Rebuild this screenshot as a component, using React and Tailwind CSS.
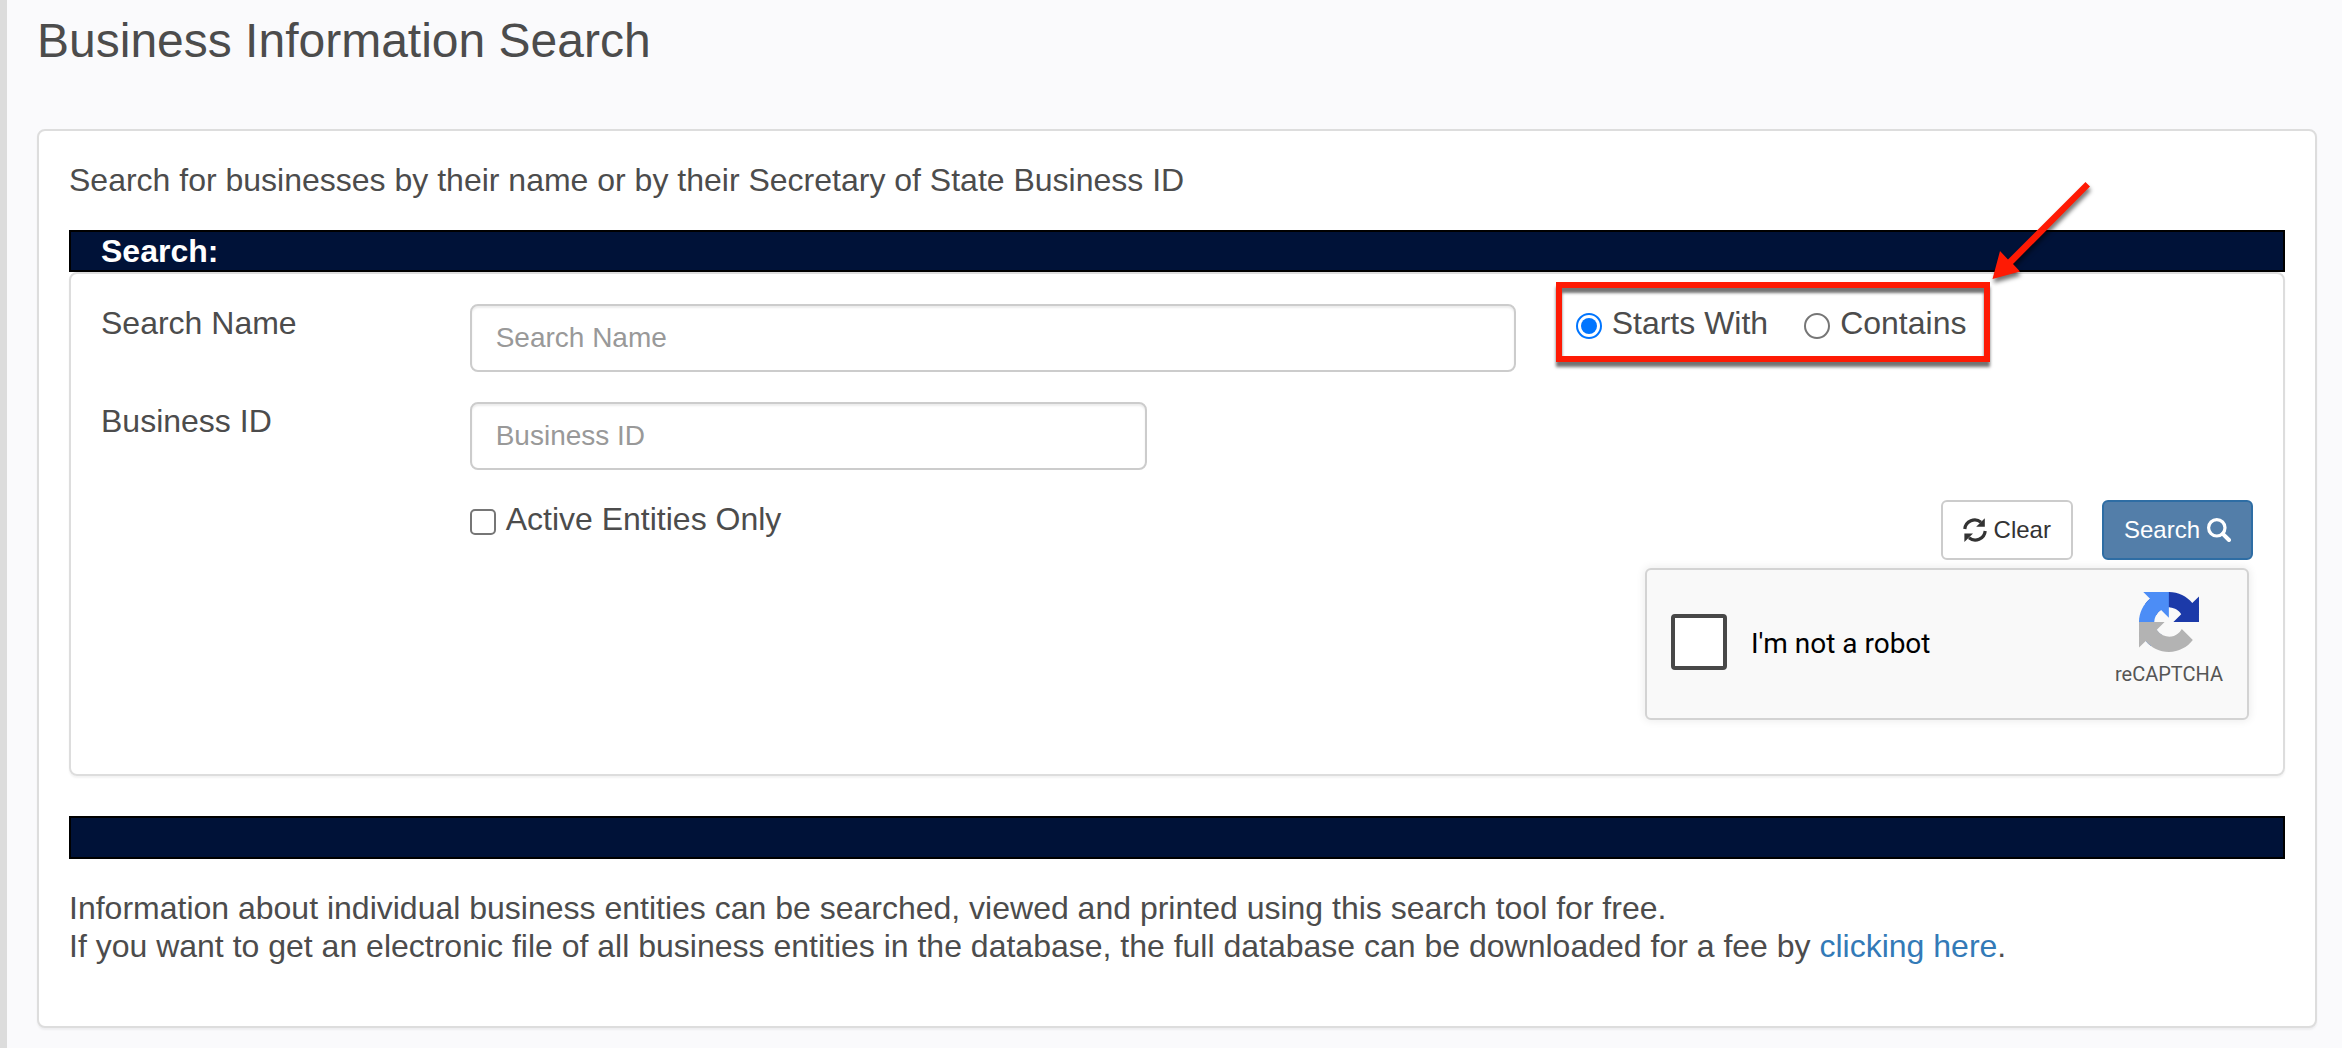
import React from "react";

const radioClass =
  "mt-[6px] appearance-none shrink-0 size-[26px] rounded-full border-2 border-[#767676] bg-white grid place-content-center checked:border-[#0075ff] before:content-[''] before:size-4 before:rounded-full checked:before:bg-[#0075ff]";

function RefreshIcon() {
  return (
    <svg className="size-6 shrink-0" viewBox="0 0 24 24" aria-hidden="true">
      <path d="M1.8 11A10 10 0 0 1 18 4.2" fill="none" stroke="#333" strokeWidth="3.2" />
      <path d="M21.8 0.3V8.8H13.2Z" fill="#333" />
      <path d="M22.2 13A10 10 0 0 1 6 19.8" fill="none" stroke="#333" strokeWidth="3.2" />
      <path d="M1.4 23.9V15.4H10Z" fill="#333" />
    </svg>
  );
}

function SearchIcon() {
  return (
    <svg className="size-6 shrink-0" viewBox="0 0 24 24" aria-hidden="true">
      <circle cx="9.8" cy="9.8" r="8.2" fill="none" stroke="#fff" strokeWidth="3.2" />
      <path d="M15.8 15.8L22 22" stroke="#fff" strokeWidth="4" strokeLinecap="round" />
    </svg>
  );
}

function CaptchaLogo() {
  return (
    <svg className="size-[60px]" viewBox="0 0 64 64" aria-hidden="true">
      <path
        fill="#1C3AA9"
        d="M64 31.955l-.033-1.37V4.687l-7.16 7.16C50.948 4.674 42.033.093 32.05.093c-10.4 0-19.622 4.96-25.458 12.64l11.736 11.86a15.55 15.55 0 0 1 4.754-5.334c2.05-1.6 4.952-2.906 8.968-2.906.485 0 .86.057 1.135.163 4.976.393 9.288 3.14 11.828 7.124l-8.307 8.307L64 31.953"
      />
      <path
        fill="#4C8DF6"
        d="M31.862.094l-1.37.033H4.594l7.16 7.16C4.58 13.147 0 22.06 0 32.046c0 10.4 4.96 19.622 12.64 25.458L24.5 45.768a15.55 15.55 0 0 1-5.334-4.754c-1.6-2.05-2.906-4.952-2.906-8.968 0-.485.057-.86.163-1.135.393-4.976 3.14-9.288 7.124-11.828l8.307 8.307L31.86.095"
      />
      <path
        fill="#B3B3B3"
        d="M.001 32.045l.033 1.37v25.898l7.16-7.16c5.86 7.173 14.774 11.754 24.76 11.754 10.4 0 19.622-4.96 25.458-12.64l-11.736-11.86a15.55 15.55 0 0 1-4.754 5.334c-2.05 1.6-4.952 2.906-8.968 2.906-.485 0-.86-.057-1.135-.163-4.976-.393-9.288-3.14-11.828-7.124l8.307-8.307c-10.522.04-22.4.066-27.295-.005"
      />
    </svg>
  );
}

function Arrow() {
  return (
    <svg
      className="absolute -top-[112px] left-[424px] w-[112px] h-[110px] pointer-events-none drop-shadow-[1px_4px_2px_rgba(0,0,0,0.55)]"
      viewBox="0 0 112 110"
      aria-hidden="true"
    >
      <path d="M6.5 103L14 75L22 83.5L99.5 6L104 10.5L27 88L34 95.5Z" fill="#fe1a04" />
    </svg>
  );
}

const inputClass =
  "block w-full h-[68px] rounded-lg border-2 border-[#ccc] bg-white px-6 text-[28px] text-[#555] placeholder:text-[#999] placeholder:opacity-100 shadow-[inset_0_2px_2px_rgba(0,0,0,0.075)] outline-none";

export default function App() {
  return (
    <div className="flex min-h-screen bg-[#fafafc] font-['Liberation_Sans',Arial,sans-serif] text-[32px] leading-[38px] text-[#4c4c4c]">
      <div className="w-[7px] shrink-0 bg-[#dcdcdc]" />
      <main className="flex-1 min-w-0 pl-[30px] pr-[25px] pb-5">
        <h1 className="mt-[14px] mb-[62px] text-[48px] leading-[53px]">Business Information Search</h1>
        <section className="rounded-lg border-2 border-[#ddd] bg-white px-[30px] pt-[30px] pb-[61px] shadow-[0_2px_2px_rgba(0,0,0,0.05)]">
          <p className="mb-[31px]">Search for businesses by their name or by their Secretary of State Business ID</p>
          <h2 className="h-[42px] border-2 border-black bg-[#001238] px-[30px] font-bold text-white">Search:</h2>
          <form
            className="rounded-lg border-2 border-[#ddd] pt-[30px] pb-[54px] shadow-[0_2px_2px_rgba(0,0,0,0.05)]"
            onSubmit={(e) => e.preventDefault()}
          >
            <div className="grid grid-cols-12">
              <label htmlFor="name" className="col-span-2 px-[30px]">Search Name</label>
              <div className="col-span-6 px-[30px]">
                <input id="name" type="text" placeholder="Search Name" className={inputClass} />
              </div>
              <div className="col-span-4 px-[30px]">
                <div className="relative w-fit">
                  <fieldset className="flex gap-9">
                    <label className="flex items-center gap-[10px]">
                      <input type="radio" name="mode" defaultChecked className={radioClass} />
                      Starts With
                    </label>
                    <label className="flex items-center gap-[10px]">
                      <input type="radio" name="mode" className={radioClass} />
                      Contains
                    </label>
                  </fieldset>
                  <div className="absolute -left-5 -right-6 -top-[22px] h-20 border-[6px] border-[#fe1a04] pointer-events-none shadow-[0_5px_3px_rgba(0,0,0,0.55),inset_0_5px_3px_rgba(0,0,0,0.55)]">
                    <Arrow />
                  </div>
                </div>
              </div>
            </div>
            <div className="mt-[30px] grid grid-cols-12">
              <label htmlFor="bid" className="col-span-2 px-[30px]">Business ID</label>
              <div className="col-span-4 px-[30px]">
                <input id="bid" type="text" placeholder="Business ID" className={inputClass} />
              </div>
            </div>
            <div className="mt-[30px] grid grid-cols-12">
              <div className="col-span-4 col-start-3 px-[30px]">
                <label className="flex w-fit items-center gap-[10px]">
                  <input
                    type="checkbox"
                    className="mt-[6px] appearance-none size-[26px] rounded-[5px] border-2 border-[#767676] bg-white"
                  />
                  Active Entities Only
                </label>
              </div>
              <div className="col-span-6 flex justify-end gap-[29px] px-[30px] text-[24px]">
                <button type="reset" className="flex h-[60px] items-center gap-[7px] rounded-md border-2 border-[#ccc] bg-white px-5 text-[#333]">
                  <RefreshIcon />
                  Clear
                </button>
                <button type="submit" className="flex h-[60px] items-center gap-[7px] rounded-md border-2 border-[#2e6da4] bg-[#537ea9] px-5 text-white">
                  Search
                  <SearchIcon />
                </button>
              </div>
            </div>
            <div className="mt-2 mr-[34px] ml-auto flex h-[152px] w-[604px] rounded-md border-2 border-[#d3d3d3] bg-[#f9f9f9] px-6 shadow-[0_0_8px_1px_rgba(0,0,0,0.08)] font-['Roboto',sans-serif]">
              <label className="flex items-center gap-6 text-[28px] text-black">
                <input type="checkbox" className="mb-1 appearance-none size-14 rounded-[4px] border-4 border-[#484848] bg-white" />
                I'm not a robot
              </label>
              <div className="ml-auto flex flex-col items-center pt-[22px] text-[20px] leading-6 text-[#555]">
                <CaptchaLogo />
                <span className="mt-[10px]">reCAPTCHA</span>
              </div>
            </div>
          </form>
          <div className="mt-10 h-[43px] border-2 border-black bg-[#001238]" />
          <p className="mt-[30px]">
            Information about individual business entities can be searched, viewed and printed using this search tool for free.
            <br />
            If you want to get an electronic file of all business entities in the database, the full database can be downloaded for a fee by{" "}
            <a href="#download" className="text-[#337ab7]">clicking here</a>.
          </p>
        </section>
      </main>
    </div>
  );
}
